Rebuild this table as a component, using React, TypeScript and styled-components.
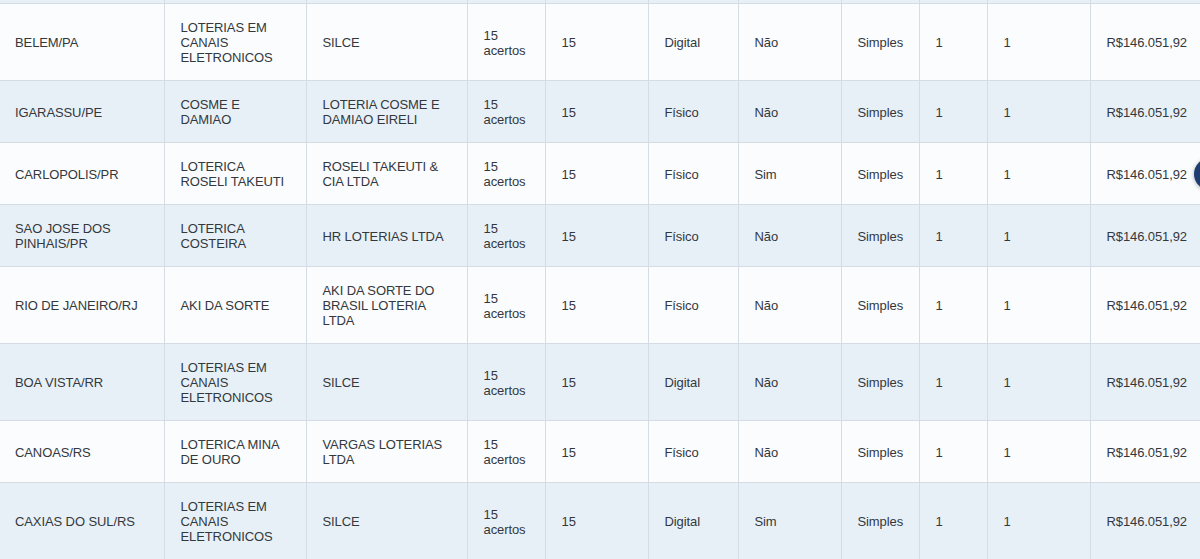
import React from 'react';
import styled, { createGlobalStyle } from 'styled-components';

const GlobalStyle = createGlobalStyle`
  html, body {
    margin: 0;
    padding: 0;
    overflow: hidden;
    background: #fbfcfd;
  }
  body {
    font-family: "Liberation Sans", Arial, sans-serif;
  }
`;

const Page = styled.div`
  width: 1200px;
  height: 559px;
  overflow: hidden;
  position: relative;
`;

const Table = styled.table`
  width: 1209px;
  table-layout: fixed;
  border-collapse: collapse;
  font-size: 13px;
  line-height: 15px;
  color: #33383d;
`;

const Row = styled.tr<{ $striped: boolean }>`
  background: ${(p) => (p.$striped ? '#e8f0f7' : '#fbfcfd')};
`;

const StubCell = styled.td`
  height: 3px;
  padding: 0;
  border-right: 1px solid #d5dce3;
  border-bottom: 1px solid #d5dce3;
`;

const Cell = styled.td<{ $first?: boolean; $nowrap?: boolean }>`
  padding: 16px 16px 15px ${(p) => (p.$first ? '15px' : '16px')};
  vertical-align: middle;
  border-right: 1px solid #d5dce3;
  border-bottom: 1px solid #d5dce3;
  letter-spacing: -0.1px;
  white-space: ${(p) => (p.$nowrap ? 'nowrap' : 'normal')};
  overflow-wrap: break-word;
`;

const FloatButton = styled.div`
  position: absolute;
  top: 158px;
  right: -26px;
  width: 32px;
  height: 32px;
  border-radius: 50%;
  background: #1f3d70;
  box-shadow: 0 1px 4px rgba(0, 0, 0, 0.3);
`;

const widths = [164, 142, 161, 78, 103, 90, 103, 78, 68, 103, 119];

type Winner = {
  city: string;
  name: string;
  company: string;
  channel: string;
  bolao: string;
};

const rows: Winner[] = [
  { city: 'BELEM/PA', name: 'LOTERIAS EM CANAIS ELETRONICOS', company: 'SILCE', channel: 'Digital', bolao: 'Não' },
  { city: 'IGARASSU/PE', name: 'COSME E DAMIAO', company: 'LOTERIA COSME E DAMIAO EIRELI', channel: 'Físico', bolao: 'Não' },
  { city: 'CARLOPOLIS/PR', name: 'LOTERICA ROSELI TAKEUTI', company: 'ROSELI TAKEUTI & CIA LTDA', channel: 'Físico', bolao: 'Sim' },
  { city: 'SAO JOSE DOS PINHAIS/PR', name: 'LOTERICA COSTEIRA', company: 'HR LOTERIAS LTDA', channel: 'Físico', bolao: 'Não' },
  { city: 'RIO DE JANEIRO/RJ', name: 'AKI DA SORTE', company: 'AKI DA SORTE DO BRASIL LOTERIA LTDA', channel: 'Físico', bolao: 'Não' },
  { city: 'BOA VISTA/RR', name: 'LOTERIAS EM CANAIS ELETRONICOS', company: 'SILCE', channel: 'Digital', bolao: 'Não' },
  { city: 'CANOAS/RS', name: 'LOTERICA MINA DE OURO', company: 'VARGAS LOTERIAS LTDA', channel: 'Físico', bolao: 'Não' },
  { city: 'CAXIAS DO SUL/RS', name: 'LOTERIAS EM CANAIS ELETRONICOS', company: 'SILCE', channel: 'Digital', bolao: 'Sim' },
];

export default function App() {
  return (
    <Page>
      <GlobalStyle />
      <Table>
        <colgroup>
          {widths.map((w, i) => (
            <col key={i} style={{ width: w }} />
          ))}
        </colgroup>
        <tbody>
          <Row $striped>
            {widths.map((_, i) => (
              <StubCell key={i} />
            ))}
          </Row>
          {rows.map((r, i) => (
            <Row key={r.city} $striped={i % 2 === 1}>
              <Cell $first>{r.city}</Cell>
              <Cell>{r.name}</Cell>
              <Cell>{r.company}</Cell>
              <Cell>15 acertos</Cell>
              <Cell $nowrap>15</Cell>
              <Cell $nowrap>{r.channel}</Cell>
              <Cell $nowrap>{r.bolao}</Cell>
              <Cell $nowrap>Simples</Cell>
              <Cell $nowrap>1</Cell>
              <Cell $nowrap>1</Cell>
              <Cell $nowrap>R$146.051,92</Cell>
            </Row>
          ))}
        </tbody>
      </Table>
      <FloatButton />
    </Page>
  );
}
